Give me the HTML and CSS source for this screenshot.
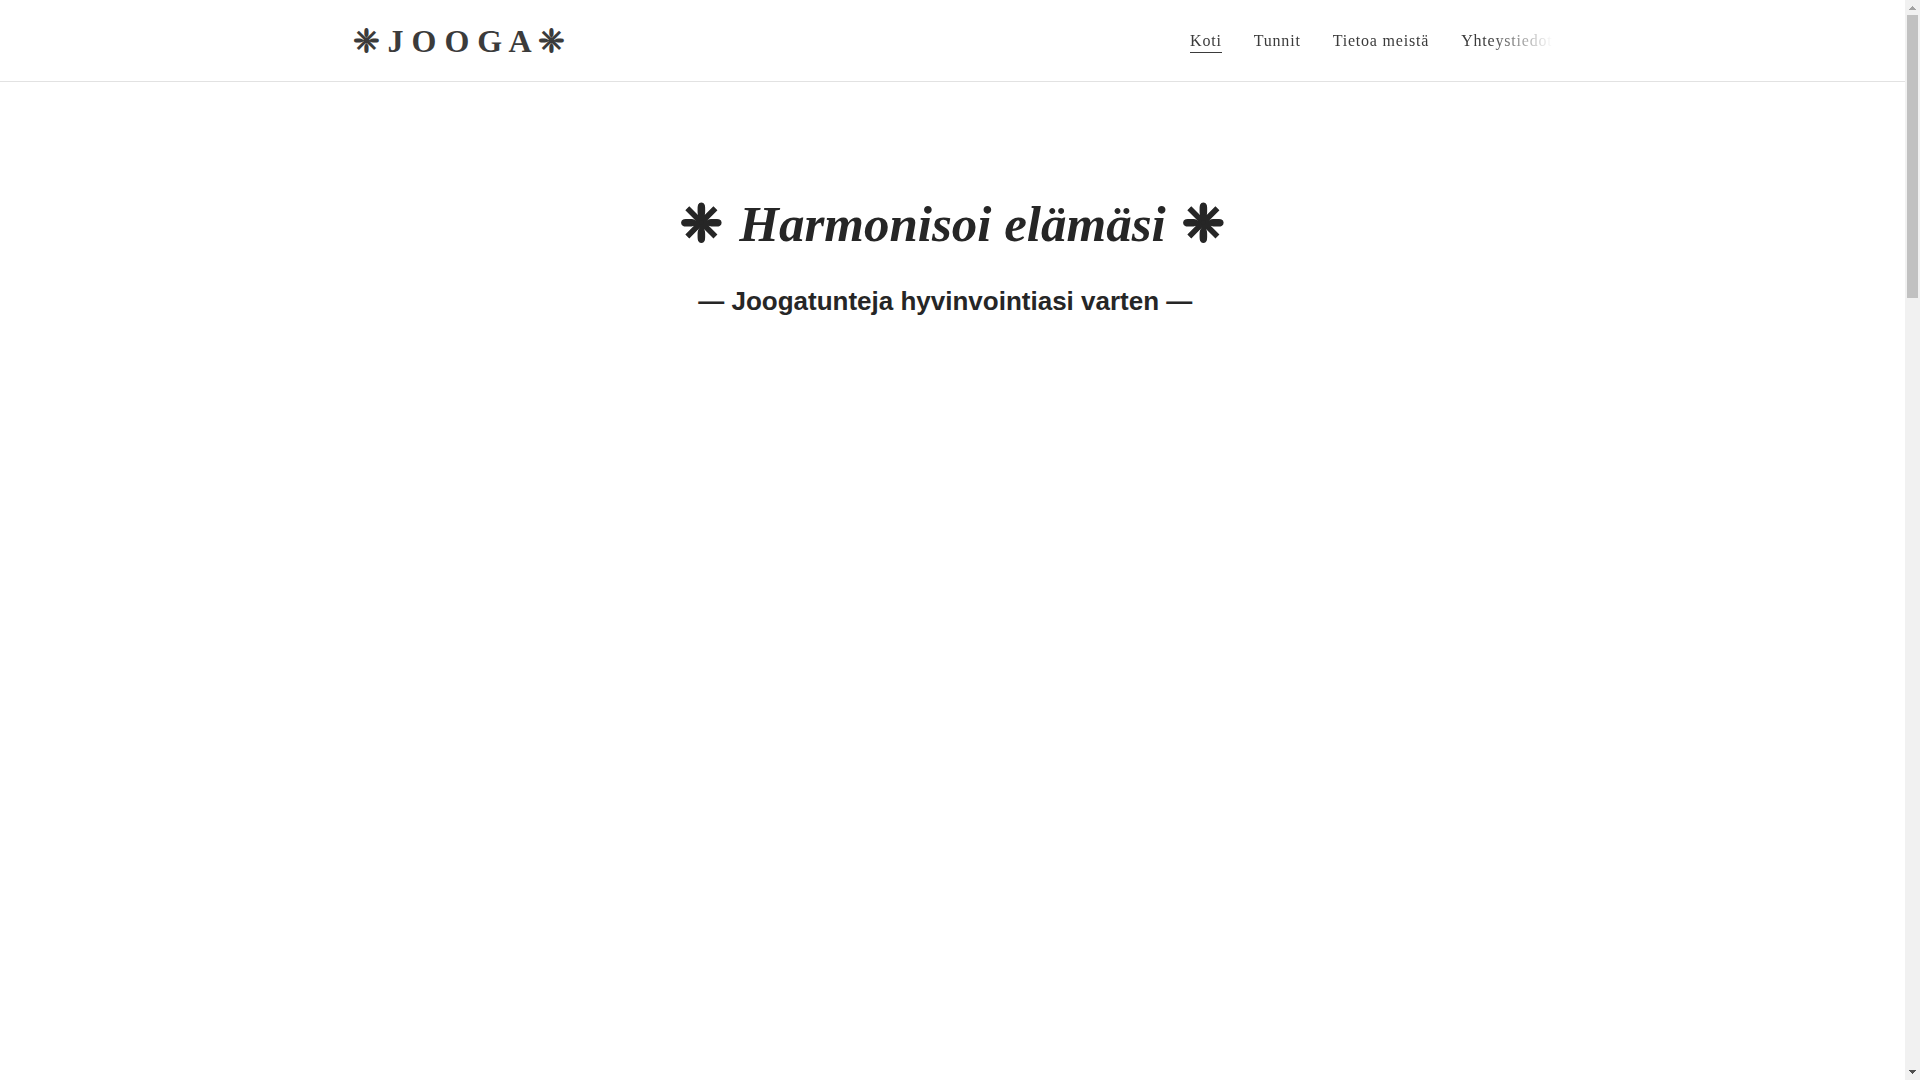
FILE: index.html
```
<!DOCTYPE html>
<html lang="fi">
<head>
    <meta charset="UTF-8">
    <meta name="viewport" content="width=device-width, initial-scale=1.0">
    <title>Jooga</title>
    <link rel="stylesheet" href="styles.css">
</head>
<body>
    <div class="page">
        <header class="header">
            <div class="header-inner">
                <a class="logo" href="#">❈ J O O G A ❈</a>
                <nav class="nav">
                    <a class="active" href="#">Koti</a>
                    <a href="#tunnit">Tunnit</a>
                    <a href="#tietoa">Tietoa meistä</a>
                    <a href="#yhteystiedot">Yhteystiedot</a>
                </nav>
            </div>
        </header>

        <main class="hero">
            <h1><span class="star">❈</span> <em>Harmonisoi elämäsi</em> <span class="star">❈</span></h1>
            <h2>— Joogatunteja hyvinvointiasi varten —&nbsp;&nbsp;</h2>
        </main>
    </div>

    <div class="scrollbar" aria-hidden="true">
        <svg class="arrow" viewBox="0 0 15 15" shape-rendering="crispEdges"><path d="M7 6h1v1h1v1h1v1h1v1H4V9h1V8h1V7h1z" fill="#a3a3a3"/></svg>
        <div class="thumb"></div>
        <svg class="arrow down" viewBox="0 0 15 15" shape-rendering="crispEdges"><path d="M4 5h7v1h-1v1H9v1H8v1H7V8H6V7H5V6H4z" fill="#505050"/></svg>
    </div>
</body>
</html>
```
FILE: styles.css
```
* {
    box-sizing: border-box;
}

body {
    margin: 0;
    display: flex;
    min-height: 100vh;
    background: #fff;
    color: #262626;
    font-family: "Liberation Serif", serif;
}

.page {
    flex: 1;
}

.header {
    border-bottom: 1px solid #e2e2e2;
}

.header-inner {
    display: flex;
    justify-content: space-between;
    align-items: center;
    max-width: 1200px;
    height: 81px;
    margin: 0 auto;
}

.logo {
    color: #3b3b3b;
    font-size: 32px;
    font-weight: bold;
    line-height: 40px;
    text-decoration: none;
}

.nav {
    display: flex;
    gap: 32px;
    -webkit-mask-image: linear-gradient(to left, transparent, #000 64px);
    mask-image: linear-gradient(to left, transparent, #000 64px);
}

.nav a {
    padding-top: 2px;
    color: #3b3b3b;
    font-size: 16px;
    line-height: 22px;
    letter-spacing: 0.05em;
    text-decoration: none;
    border-bottom: 1px solid transparent;
}

.nav a.active {
    border-bottom-color: #3b3b3b;
}

.hero {
    padding: 112px 24px;
    text-align: center;
}

h1 {
    margin: 0 0 27px;
    font-size: 51px;
    line-height: 60px;
}

h1 em {
    padding: 0 4px;
}

h1 .star {
    -webkit-text-stroke: 1px currentColor;
}

h2 {
    margin: 0;
    font-family: "Liberation Sans", Arial, sans-serif;
    font-size: 26px;
    line-height: 40px;
}

/* scroll track on the right edge */
.scrollbar {
    display: flex;
    flex-direction: column;
    width: 15px;
    background: #f1f1f1;
}

.arrow {
    width: 15px;
    height: 15px;
}

.arrow.down {
    margin-top: auto;
}

.thumb {
    width: 11px;
    height: 283px;
    margin: 0 auto;
    background: #c1c1c1;
}
```
